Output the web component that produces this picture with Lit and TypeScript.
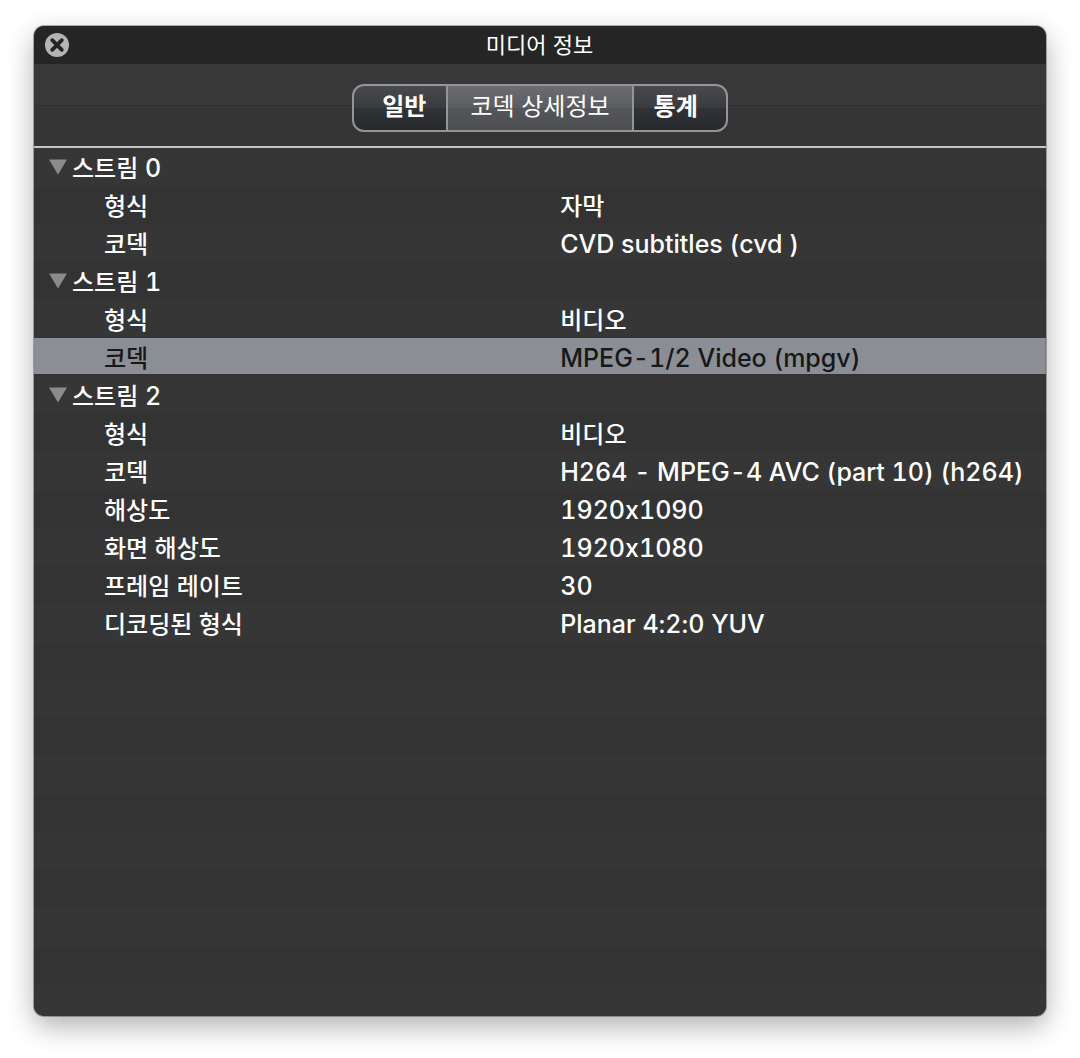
import { LitElement, html, css } from "lit";
import { customElement, state } from "lit/decorators.js";
import { classMap } from "lit/directives/class-map.js";

interface Property {
  name: string;
  value: string;
}

interface Stream {
  index: number;
  properties: Property[];
}

const TABS = ["일반", "코덱 상세정보", "통계"];

const STREAMS: Stream[] = [
  {
    index: 0,
    properties: [
      { name: "형식", value: "자막" },
      { name: "코덱", value: "CVD subtitles (cvd )" },
    ],
  },
  {
    index: 1,
    properties: [
      { name: "형식", value: "비디오" },
      { name: "코덱", value: "MPEG-1/2 Video (mpgv)" },
    ],
  },
  {
    index: 2,
    properties: [
      { name: "형식", value: "비디오" },
      { name: "코덱", value: "H264 - MPEG-4 AVC (part 10) (h264)" },
      { name: "해상도", value: "1920x1090" },
      { name: "화면 해상도", value: "1920x1080" },
      { name: "프레임 레이트", value: "30" },
      { name: "디코딩된 형식", value: "Planar 4:2:0 YUV" },
    ],
  },
];

const isLatin = (text: string) => /^[\x20-\x7e]+$/.test(text);

@customElement("app-root")
export class AppRoot extends LitElement {
  static styles = css`
    :host {
      display: flex;
      box-sizing: border-box;
      min-height: 100vh;
      padding: 26px 34px 42px;
      background: #fff;
      font-family: Inter, "Noto Sans CJK KR", sans-serif;
      font-size: 24px;
      line-height: 34px;
      color: #fff;
    }
    button {
      margin: 0;
      padding: 0;
      border: 0;
      background: none;
      font: inherit;
      color: inherit;
    }
    .window {
      flex: 1;
      min-width: 0;
      display: flex;
      flex-direction: column;
      overflow: hidden;
      border-radius: 10px;
      background: #353535;
      box-shadow: 0 0 0 1px rgba(0, 0, 0, 0.28), 0 10px 28px rgba(0, 0, 0, 0.32);
    }
    .titlebar {
      display: grid;
      grid-template-columns: 24px 1fr 24px;
      align-items: center;
      height: 38px;
      padding: 0 12px 0 11px;
      background: #252525;
    }
    .close {
      width: 24px;
      height: 24px;
    }
    .close svg,
    .toggle svg {
      display: block;
    }
    .title {
      margin: 0;
      font-size: 22px;
      font-weight: 400;
      line-height: 36px;
      text-align: center;
    }
    .toolbar {
      display: flex;
      justify-content: center;
      padding: 20px 0 14px;
      border-bottom: 2px solid #c4c4c4;
      background: linear-gradient(#383838 0 41px, #2f2f2f 41px 42px, #353535 42px);
    }
    .tabs {
      display: flex;
      overflow: hidden;
      border: 2px solid #939599;
      border-radius: 12px;
      background: linear-gradient(#484a4e, #393b3f 50%, #313236 51%, #28292d);
    }
    .tab {
      height: 44px;
      padding: 0 20px 2px;
      font-weight: 700;
      line-height: 42px;
      white-space: nowrap;
    }
    .tab + .tab {
      border-left: 2px solid #939599;
    }
    .tab:first-child {
      padding-left: 28px;
    }
    .tab:last-child {
      padding-right: 28px;
    }
    .tab.active {
      padding-inline: 22px;
      font-weight: 400;
      background: linear-gradient(#6c6d70, #5b5c5f 50%, #555659 51%, #4d4e52);
    }
    .list {
      flex: 1;
      background: repeating-linear-gradient(#363636 0 38px, #333 38px 76px);
    }
    .tree {
      width: 100%;
      border-collapse: collapse;
      table-layout: fixed;
      font-weight: 500;
    }
    .name-col {
      width: 52%;
    }
    .cell {
      height: 34px;
      padding: 4px 0 0;
      font-weight: inherit;
      text-align: left;
      white-space: nowrap;
      vertical-align: top;
    }
    .group {
      display: flex;
      align-items: center;
      gap: 5px;
      padding-left: 15px;
    }
    .toggle {
      padding-bottom: 4px;
    }
    .toggle.closed svg {
      transform: rotate(-90deg);
    }
    .name {
      padding-left: 70px;
    }
    .latin {
      font-size: 25px;
      line-height: 30px;
      font-variant-ligatures: no-contextual;
      font-variant-numeric: tabular-nums;
    }
    .selected {
      color: #17181a;
      background: linear-gradient(#8b8e95 0 36px, transparent 36px);
    }
  `;

  @state() private tab = 1;
  @state() private selected = "1-1";
  @state() private closed = new Set<number>();

  private toggle(index: number) {
    const next = new Set(this.closed);
    if (!next.delete(index)) next.add(index);
    this.closed = next;
  }

  private renderStream(stream: Stream) {
    const closed = this.closed.has(stream.index);
    return html`
      <tr>
        <th class="cell" colspan="2" scope="rowgroup">
          <div class="group">
            <button
              class=${classMap({ toggle: true, closed })}
              aria-label="스트림 ${stream.index}"
              aria-expanded=${closed ? "false" : "true"}
              @click=${() => this.toggle(stream.index)}
            >
              <svg width="18" height="16" viewBox="0 0 18 16" aria-hidden="true">
                <path d="M0 0.5H18L9 15.5Z" fill="#8b8b8b" />
              </svg>
            </button>
            <span>스트림<span class="latin"> ${stream.index}</span></span>
          </div>
        </th>
      </tr>
      ${closed
        ? null
        : stream.properties.map((property, i) => {
            const key = `${stream.index}-${i}`;
            return html`
              <tr
                class=${classMap({ selected: key === this.selected })}
                @click=${() => (this.selected = key)}
              >
                <th class="cell name" scope="row">${property.name}</th>
                <td class="cell">
                  <span class=${classMap({ latin: isLatin(property.value) })}>${property.value}</span>
                </td>
              </tr>
            `;
          })}
    `;
  }

  render() {
    return html`
      <main class="window">
        <header class="titlebar">
          <button class="close" aria-label="닫기">
            <svg width="24" height="24" viewBox="0 0 24 24" aria-hidden="true">
              <circle cx="12" cy="12" r="12" fill="#b4b4b4" />
              <path
                d="M7.2 7.2L16.8 16.8M16.8 7.2L7.2 16.8"
                stroke="#252525"
                stroke-width="3.8"
                stroke-linecap="round"
              />
            </svg>
          </button>
          <h1 class="title">미디어 정보</h1>
        </header>
        <div class="toolbar">
          <div class="tabs" role="tablist">
            ${TABS.map(
              (label, i) => html`
                <button
                  role="tab"
                  class=${classMap({ tab: true, active: i === this.tab })}
                  aria-selected=${i === this.tab ? "true" : "false"}
                  @click=${() => (this.tab = i)}
                >${label}</button>
              `
            )}
          </div>
        </div>
        <div class="list">
          <table class="tree">
            <colgroup>
              <col class="name-col" />
              <col />
            </colgroup>
            <tbody>
              ${STREAMS.map((stream) => this.renderStream(stream))}
            </tbody>
          </table>
        </div>
      </main>
    `;
  }
}
